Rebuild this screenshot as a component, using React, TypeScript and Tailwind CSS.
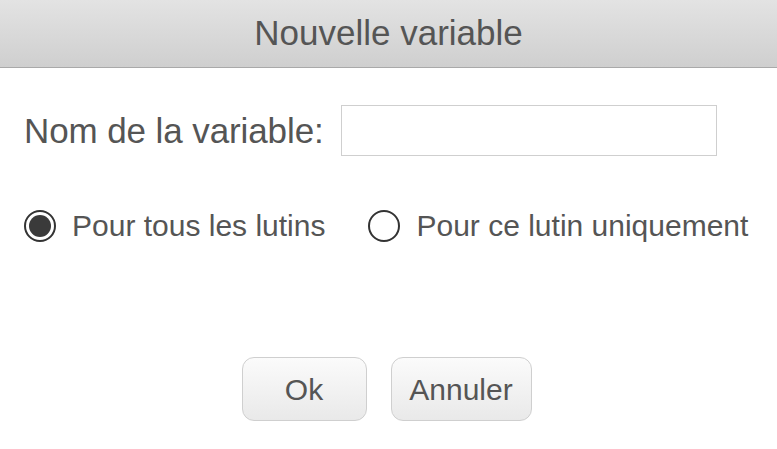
import React, { useState } from 'react';

const Radio: React.FC<{ checked: boolean; label: string; onClick: () => void }> = ({ checked, label, onClick }) => (
  <button type="button" onClick={onClick} className="flex items-center gap-[16px]">
    <span className="w-[32px] h-[32px] rounded-full border-[2px] border-[#333] flex items-center justify-center bg-white">
      {checked && <span className="w-[22px] h-[22px] rounded-full bg-[#3a3a3a]" />}
    </span>
    <span className="text-[30px] leading-none text-[#555]">{label}</span>
  </button>
);

const App: React.FC = () => {
  const [name, setName] = useState('');
  const [scope, setScope] = useState<'all' | 'this'>('all');

  return (
    <div className="w-[777px] h-[449px] bg-white overflow-hidden" style={{ fontFamily: '"Liberation Sans", Arial, sans-serif' }}>
      {/* Title bar */}
      <div className="h-[68px] border-b border-[#a9a9a9] bg-gradient-to-b from-[#e3e3e3] to-[#cfcfcf] flex items-center justify-center">
        <h1 className="text-[35px] text-[#555] leading-none pb-[3px]">Nouvelle variable</h1>
      </div>

      <div className="pl-[24px]">
        <div className="flex items-center gap-[17px] mt-[37px]">
          <label className="text-[35px] leading-none text-[#555] tracking-[-0.1px]">Nom de la variable:</label>
          <input
            type="text"
            value={name}
            onChange={(e) => setName(e.target.value)}
            className="w-[376px] h-[51px] border border-[#cfcfcf] outline-none px-2 text-[24px] text-[#555]"
          />
        </div>

        <div className="flex items-center mt-[54px] gap-[43px]">
          <Radio checked={scope === 'all'} label="Pour tous les lutins" onClick={() => setScope('all')} />
          <Radio checked={scope === 'this'} label="Pour ce lutin uniquement" onClick={() => setScope('this')} />
        </div>
      </div>

      <div className="flex justify-center gap-[24px] mt-[115px] pr-[4px]">
        <button
          type="button"
          className="w-[125px] h-[64px] rounded-[12px] border border-[#cfcfcf] bg-gradient-to-b from-[#fbfbfb] to-[#e9e9e9] text-[30px] text-[#555]"
        >
          Ok
        </button>
        <button
          type="button"
          className="w-[141px] h-[64px] rounded-[12px] border border-[#cfcfcf] bg-gradient-to-b from-[#fbfbfb] to-[#e9e9e9] text-[30px] text-[#555]"
        >
          Annuler
        </button>
      </div>
    </div>
  );
};

export default App;
